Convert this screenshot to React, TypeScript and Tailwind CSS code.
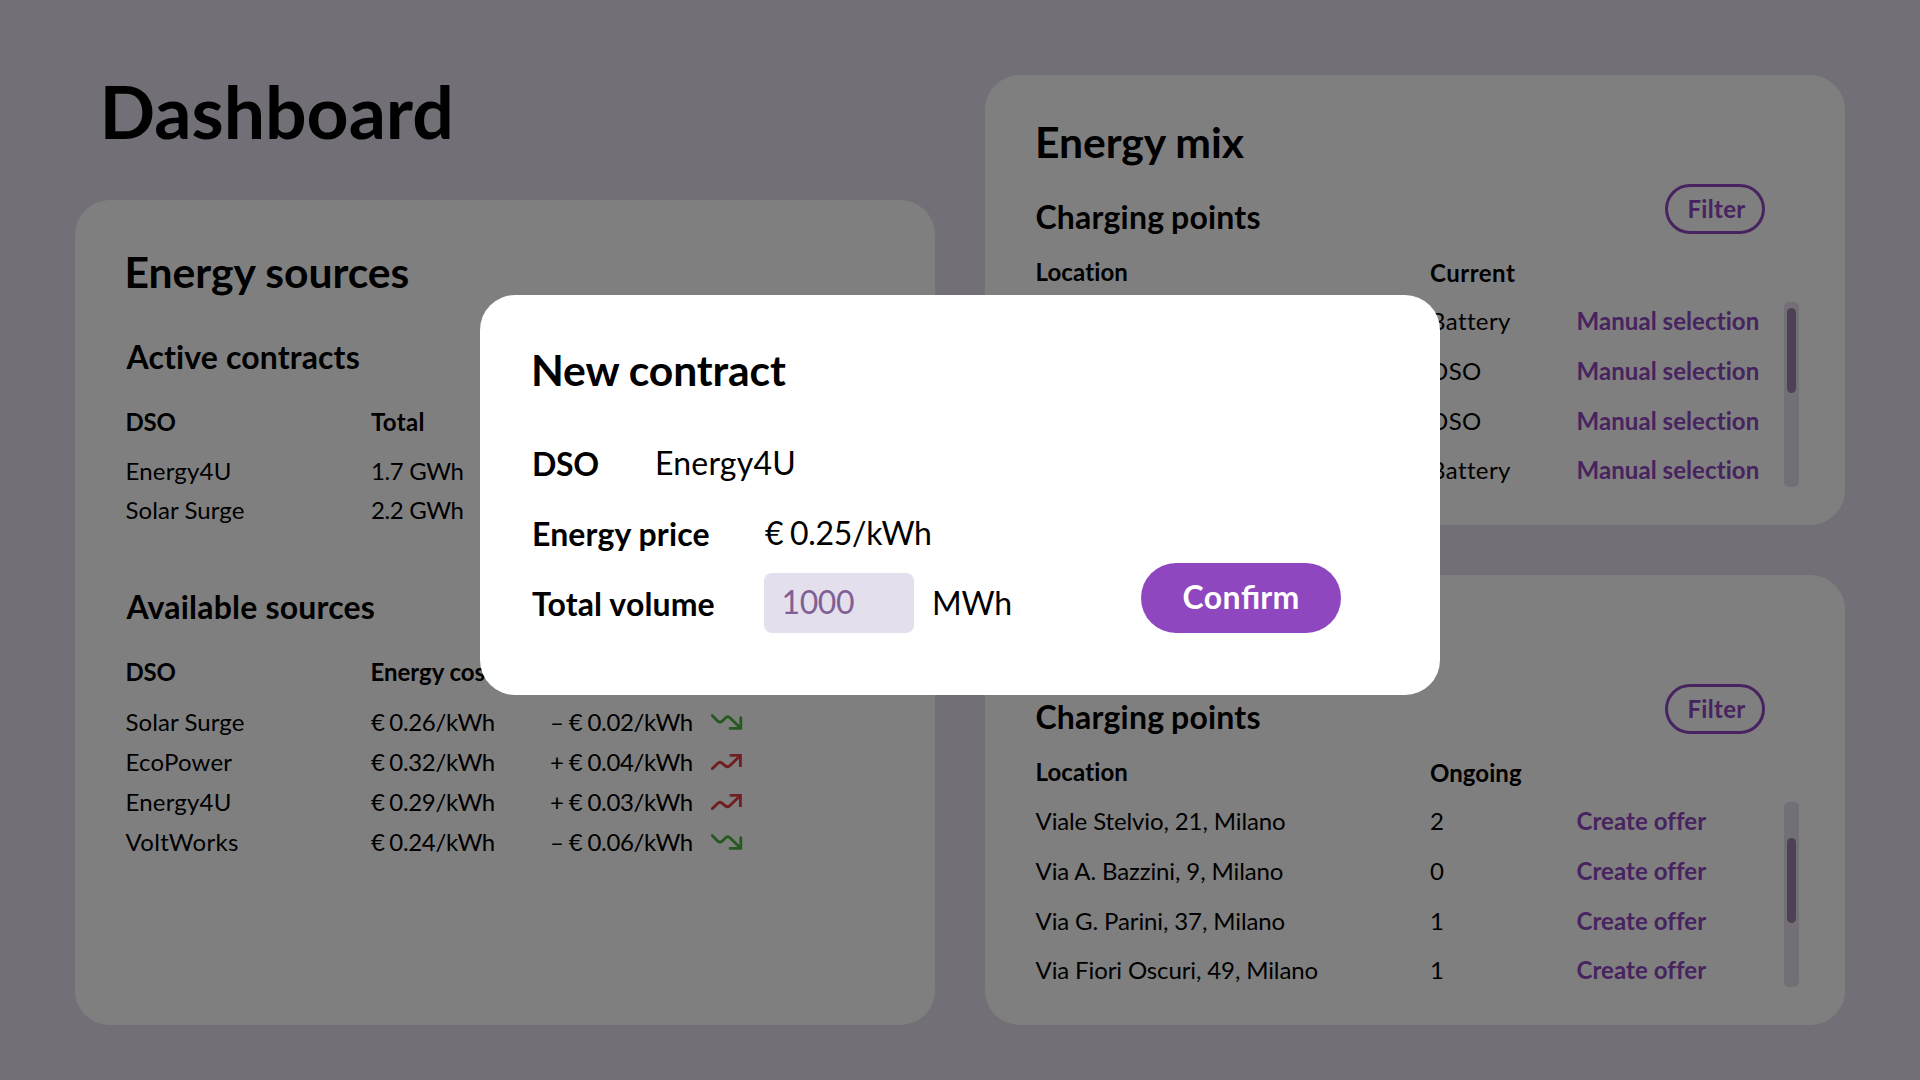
import React from "react";

type Trend = "up" | "down";

function TrendIcon({ trend }: { trend: Trend }) {
  return trend === "down" ? (
    <svg className="mt-1.5 h-5 w-8 shrink-0" viewBox="0 0 32 20" fill="none" stroke="#4ab43f" strokeWidth="2.8" strokeLinecap="round" strokeLinejoin="round">
      <path d="M1.2 2.4 L6.6 7.9 Q9 10.3 11.4 7.9 L14.4 5 Q16.8 2.6 19.2 5 L29.8 15.3 M29.8 4.7 V15.3 H19" />
    </svg>
  ) : (
    <svg className="mt-1.5 h-5 w-8 shrink-0" viewBox="0 0 32 20" fill="none" stroke="#e03c40" strokeWidth="2.8">
      <path strokeLinecap="round" d="M1.2 15.8 L6.6 10.4 Q9 8 11.4 10.4 L14 12.6 Q16.6 15 19 12.6 L29 2.8" />
      <path d="M29.4 14 V2.4 H19.5" />
      <circle cx="19.6" cy="2.4" r="0.4" strokeWidth="2" />
    </svg>
  );
}

const contracts = [
  { dso: "Energy4U", dsoStyle: "tracking-[0.2px]", total: "1.7 GWh" },
  { dso: "Solar Surge", dsoStyle: "tracking-[0.08px]", total: "2.2 GWh" },
];

const sources: { dso: string; dsoStyle: string; cost: string; change: string; trend: Trend }[] = [
  { dso: "Solar Surge", dsoStyle: "tracking-[0.08px]", cost: "€ 0.26/kWh", change: "– € 0.02/kWh", trend: "down" },
  { dso: "EcoPower", dsoStyle: "tracking-[0.22px]", cost: "€ 0.32/kWh", change: "+ € 0.04/kWh", trend: "up" },
  { dso: "Energy4U", dsoStyle: "tracking-[0.2px]", cost: "€ 0.29/kWh", change: "+ € 0.03/kWh", trend: "up" },
  { dso: "VoltWorks", dsoStyle: "tracking-[0.32px]", cost: "€ 0.24/kWh", change: "– € 0.06/kWh", trend: "down" },
];

const mixRows = [
  { location: "", value: "Battery" },
  { location: "", value: "DSO" },
  { location: "", value: "DSO" },
  { location: "", value: "Battery" },
];

const offerRows = [
  { location: "Viale Stelvio, 21, Milano", value: "2" },
  { location: "Via A. Bazzini, 9, Milano", value: "0" },
  { location: "Via G. Parini, 37, Milano", value: "1" },
  { location: "Via Fiori Oscuri, 49, Milano", value: "1" },
];

function SectionTitle({ children, className }: { children: React.ReactNode; className: string }) {
  return <h2 className={`h-[51px] text-[42.67px] leading-[51px] font-bold whitespace-nowrap ${className}`}>{children}</h2>;
}

function SubTitle({ children, className }: { children: React.ReactNode; className: string }) {
  return <h3 className={`h-[39px] text-[32px] leading-[39px] font-bold whitespace-nowrap ${className}`}>{children}</h3>;
}

type PointsProps = {
  title: string;
  column: string;
  columnStyle: string;
  rows: { location: string; value: string }[];
  action: string;
  thumb: string;
};

function ChargingPointsCard({ title, column, columnStyle, rows, action, thumb }: PointsProps) {
  return (
    <section className="h-[450px] w-[860px] rounded-[35px] bg-white pt-[41px] pl-[49px]">
      <SectionTitle className="pl-px tracking-[-0.08px]">{title}</SectionTitle>
      <div className="mt-[17px] mr-20 flex h-[50px] justify-between pl-[1.5px]">
        <SubTitle className="mt-[13px] tracking-[0.2px] [word-spacing:-1.2px]">Charging points</SubTitle>
        <button className="h-[50px] w-[100px] rounded-full border-3 border-[#8f47bf] pt-[7px] pb-2 pl-[19.5px] text-left text-2xl leading-[29px] font-bold tracking-[0.3px] text-[#8f47bf]">
          Filter
        </button>
      </div>
      <div className="mt-[23px] flex h-[29px] pl-[1.5px] text-2xl leading-[29px] font-bold">
        <span className="w-[394.5px] tracking-[0.12px]">Location</span>
        <span className={`pt-px ${columnStyle}`}>{column}</span>
      </div>
      <div className="mt-4 flex">
        <div className="flex w-[750px] flex-col gap-[21px] pt-1 pl-[1.5px] text-2xl leading-[29px]">
          {rows.map((row, i) => (
            <div key={i} className="flex h-[29px] whitespace-nowrap last:-mt-px">
              <span className="w-[394.5px] tracking-[-0.12px]">{row.location}</span>
              <span className="w-[146.5px] tracking-[0.4px]">{row.value}</span>
              <a className="font-bold tracking-[0.07px] text-[#8f47bf]">{action}</a>
            </div>
          ))}
        </div>
        <div className="h-[185px] w-[15px] rounded-[5px] bg-[#e4dfec] px-[3px]">
          <div className={`h-[85px] rounded-full bg-[#9e80ae] ${thumb}`} />
        </div>
      </div>
    </section>
  );
}

function EnergySourcesCard() {
  return (
    <section className="h-[825px] w-[860px] rounded-[35px] bg-white pt-[46px] pl-[49px]">
      <SectionTitle className="ml-[0.5px] tracking-[-0.03px]">Energy sources</SectionTitle>

      <SubTitle className="mt-10 ml-[2.5px] tracking-[0.14px]">Active contracts</SubTitle>
      <div className="mt-[31px] ml-[1.5px] flex text-2xl leading-[29px] font-bold">
        <span className="w-[245.5px] tracking-[-0.2px]">DSO</span>
        <span className="tracking-[0.33px]">Total</span>
      </div>
      <div className="mt-5 ml-[1.5px] flex flex-col gap-2.5 text-2xl leading-[29px]">
        {contracts.map((c) => (
          <div key={c.dso} className="flex">
            <span className={`w-[245.5px] ${c.dsoStyle}`}>{c.dso}</span>
            <span className="tracking-[-0.37px]">{c.total}</span>
          </div>
        ))}
      </div>

      <SubTitle className="mt-[63px] ml-[2.5px] tracking-[0.2px]">Available sources</SubTitle>
      <div className="mt-[31px] ml-[1.5px] flex text-2xl leading-[29px] font-bold">
        <span className="w-[245px] tracking-[-0.2px]">DSO</span>
        <span className="tracking-[-0.05px]">Energy cost</span>
      </div>
      <div className="mt-[21px] ml-[1.5px] flex flex-col gap-[11px] text-2xl leading-[29px]">
        {sources.map((s) => (
          <div key={s.dso} className="flex h-[29px] whitespace-nowrap">
            <span className={`w-[245.5px] ${s.dsoStyle}`}>{s.dso}</span>
            <span className="w-[179px] tracking-[-0.3px] [word-spacing:-1.2px]">{s.cost}</span>
            <span className="w-[160.5px] tracking-[-0.35px] [word-spacing:-0.6px]">{s.change}</span>
            <TrendIcon trend={s.trend} />
          </div>
        ))}
      </div>
    </section>
  );
}

function NewContractDialog() {
  return (
    <div className="absolute inset-0 flex items-start justify-center bg-black/50 pt-[295px]">
      <div role="dialog" className="h-[400px] w-[960px] rounded-[35px] bg-white pt-[49px] pl-[50px] text-[32px] leading-[39px]">
        <SectionTitle className="pl-px tracking-[-0.15px]">New contract</SectionTitle>
        <div className="mt-12 flex h-[39px] pl-[2px]">
          <span className="w-[123px] pt-px font-bold tracking-[-0.3px]">DSO</span>
          <span className="tracking-[0.2px]">Energy4U</span>
        </div>
        <div className="mt-[31px] flex h-[39px] pl-[2px]">
          <span className="w-[233px] pt-px font-bold tracking-[0.12px]">Energy price</span>
          <span className="tracking-[-0.33px] [word-spacing:-1px]">€ 0.25/kWh</span>
        </div>
        <div className="mt-[11px] flex h-[70px] items-end pl-[2px]">
          <span className="h-[49px] w-[232px] font-bold tracking-[0.14px]">Total volume</span>
          <div className="h-[60px] w-[150px] rounded-lg bg-[#e4dfec] pt-[9px] pl-[17.5px] tracking-[-0.39px] text-[#7f6095]">1000</div>
          <span className="h-[50px] w-[227px] pl-[18px] tracking-[-0.2px]">MWh</span>
          <button className="flex h-[70px] w-[200px] rounded-full bg-[#8f47bf] pt-[14px] pl-[41.5px] font-bold text-white">
            <span className="tracking-[0.4px]">Con</span>
            <span>fi</span>
            <span className="tracking-[0.5px]">rm</span>
          </button>
        </div>
      </div>
    </div>
  );
}

export default function App() {
  return (
    <div className="relative flex h-[1080px] w-[1920px] gap-[50px] overflow-hidden bg-[#e4dfec] pl-[75px] font-['Lato',sans-serif] font-normal text-black">
      <div className="pt-[67px]">
        <h1 className="mb-[45px] ml-[24.5px] h-[88px] text-[73.33px] leading-[88px] font-bold tracking-[-0.04px]">Dashboard</h1>
        <EnergySourcesCard />
      </div>
      <div className="flex flex-col gap-[50px] pt-[75px]">
        <ChargingPointsCard title="Energy mix" column="Current" columnStyle="tracking-[0.5px]" rows={mixRows} action="Manual selection" thumb="mt-1.5" />
        <ChargingPointsCard title="" column="Ongoing" columnStyle="tracking-[0.05px]" rows={offerRows} action="Create offer" thumb="mt-9" />
      </div>
      <NewContractDialog />
    </div>
  );
}
